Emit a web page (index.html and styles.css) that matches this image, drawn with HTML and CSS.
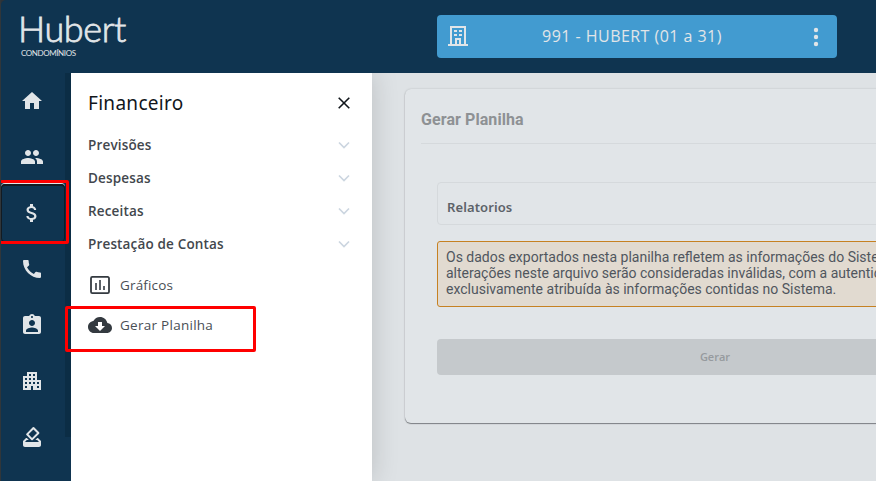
FILE: index.html
```html
<!DOCTYPE html>
<html lang="pt-BR">
<head>
<meta charset="utf-8">
<title>Hubert Condomínios</title>
<link rel="stylesheet" href="styles.css">
</head>
<body>
<div class="app">
  <header class="topbar">
    <div class="logo"><span class="logo-name">Hubert</span><span class="logo-sub">CONDOMÍNIOS</span></div>
    <div class="picker">
      <svg class="building" viewBox="0 0 20 20"><path d="M3 18V1h14v17M0 19h20M8 18v-5h4v5" fill="none" stroke="currentColor" stroke-width="2"/><path d="M6 4h3v2H6zm5 0h3v2h-3zM6 8h3v2H6zm5 0h3v2h-3z" fill="currentColor"/></svg>
      <span class="picker-label">991 - HUBERT (01 a 31)</span>
      <svg class="dots" viewBox="0 0 24 24"><circle cx="12" cy="5" r="2.2"/><circle cx="12" cy="12" r="2.2"/><circle cx="12" cy="19" r="2.2"/></svg>
    </div>
  </header>
  <div class="body">
    <nav class="rail">
      <a class="rail-item"><svg viewBox="0 0 24 24"><path d="M10 20v-6h4v6h5v-8h3L12 3 2 12h3v8z"/></svg></a>
      <a class="rail-item"><svg viewBox="0 0 24 24"><path d="M16 11c1.66 0 2.99-1.34 2.99-3S17.66 5 16 5s-3 1.34-3 3 1.34 3 3 3zm-8 0c1.66 0 2.99-1.34 2.99-3S9.66 5 8 5 5 6.34 5 8s1.34 3 3 3zm0 2c-2.33 0-7 1.17-7 3.500V19h14v-2.500c0-2.330-4.670-3.500-7-3.500zm8 0c-.29 0-.62.02-.97.050 1.160.84 1.970 1.970 1.970 3.450V19h6v-2.500c0-2.330-4.670-3.500-7-3.500z"/></svg></a>
      <a class="rail-item active"><svg viewBox="0 0 24 24"><path d="M11.800 10.900c-2.270-.59-3-1.200-3-2.150 0-1.090 1.010-1.850 2.700-1.850 1.780 0 2.440.85 2.500 2.100h2.210c-.07-1.720-1.120-3.300-3.210-3.810V3h-3v2.160c-1.940.42-3.500 1.680-3.500 3.610 0 2.310 1.910 3.460 4.700 4.130 2.500.6 3 1.480 3 2.410 0 .69-.49 1.790-2.700 1.790-2.060 0-2.870-.92-2.980-2.100h-2.200c.12 2.190 1.760 3.420 3.680 3.830V21h3v-2.150c1.950-.37 3.500-1.500 3.500-3.550 0-2.840-2.430-3.810-4.700-4.400z"/></svg></a>
      <a class="rail-item"><svg viewBox="0 0 24 24"><path d="M20.010 15.380c-1.230 0-2.420-.2-3.530-.56a.977.977 0 0 0-1.010.24l-1.570 1.970c-2.830-1.350-5.480-3.900-6.890-6.830l1.950-1.660c.27-.28.35-.67.24-1.020-.37-1.110-.56-2.300-.56-3.530 0-.54-.45-.99-.99-.99H4.190C3.650 3 3 3.240 3 3.990 3 13.280 10.730 21 20.010 21c.71 0 .99-.63.99-1.180v-3.450c0-.54-.45-.99-.99-.99z"/></svg></a>
      <a class="rail-item"><svg viewBox="0 0 24 24"><path d="M19 3h-4.180C14.400 1.840 13.300 1 12 1s-2.400.84-2.820 2H5c-1.100 0-2 .9-2 2v14c0 1.100.9 2 2 2h14c1.100 0 2-.9 2-2V5c0-1.100-.9-2-2-2zm-7 0c.55 0 1 .45 1 1s-.45 1-1 1-1-.45-1-1 .45-1 1-1zm0 4c1.660 0 3 1.340 3 3s-1.340 3-3 3-3-1.340-3-3 1.340-3 3-3zm6 12H6v-1.400c0-2 4-3.100 6-3.100s6 1.100 6 3.100V19z"/></svg></a>
      <a class="rail-item"><svg viewBox="0 0 24 24"><path d="M17 11V3H7v4H3v14h8v-4h2v4h8V11h-4zM7 19H5v-2h2v2zm0-4H5v-2h2v2zm0-4H5V9h2v2zm4 4H9v-2h2v2zm0-4H9V9h2v2zm0-4H9V5h2v2zm4 8h-2v-2h2v2zm0-4h-2V9h2v2zm0-4h-2V5h2v2zm4 12h-2v-2h2v2zm0-4h-2v-2h2v2z"/></svg></a>
      <a class="rail-item"><svg viewBox="0 0 24 24"><path d="M18 13h-.68l-2 2h1.910L19 17H5l1.780-2h2.050l-2-2H6l-3 3v4c0 1.100.89 2 1.990 2H19c1.100 0 2-.89 2-2v-4l-3-3zm-1-5.050-4.950 4.950-3.540-3.540 4.950-4.950L17 7.950zm-4.240-5.660L6.390 8.660c-.39.39-.39 1.020 0 1.410l4.950 4.950c.39.39 1.020.39 1.410 0l6.360-6.360c.39-.39.39-1.020 0-1.410L14.160 2.300a.975.975 0 0 0-1.400-.01z"/></svg></a>
    </nav>
    <aside class="menu">
      <div class="menu-head"><h2>Financeiro</h2><svg class="close" viewBox="0 0 12 12"><path d="M.7.700l10.600 10.600M11.300.7.700 11.300"/></svg></div>
      <div class="group"><span>Previsões</span><svg viewBox="0 0 12 8"><path d="M1 1.500l5 5 5-5"/></svg></div>
      <div class="group"><span>Despesas</span><svg viewBox="0 0 12 8"><path d="M1 1.500l5 5 5-5"/></svg></div>
      <div class="group"><span>Receitas</span><svg viewBox="0 0 12 8"><path d="M1 1.500l5 5 5-5"/></svg></div>
      <div class="group"><span>Prestação de Contas</span><svg viewBox="0 0 12 8"><path d="M1 1.500l5 5 5-5"/></svg></div>
      <div class="links">
        <a class="link"><svg viewBox="0 0 24 24"><path d="M4.300 3.900h15.400a1.300 1.300 0 0 1 1.300 1.300v13.600a1.300 1.300 0 0 1-1.300 1.300H4.300A1.300 1.300 0 0 1 3 18.800V5.200a1.300 1.300 0 0 1 1.300-1.300z" fill="none" stroke="currentColor" stroke-width="1.800"/><path class="bars" d="M7 10h2v7H7zm4-3h2v10h-2zm4 6h2v4h-2z"/></svg><span>Gráficos</span></a>
        <a class="link link-sheet"><svg viewBox="0 0 24 24"><path d="M19.350 10.040C18.670 6.590 15.640 4 12 4 9.110 4 6.600 5.640 5.350 8.040 2.340 8.360 0 10.910 0 14c0 3.310 2.690 6 6 6h13c2.760 0 5-2.240 5-5 0-2.640-2.050-4.780-4.650-4.960zM17 13l-5 5-5-5h3V9h4v4h3z"/></svg><span>Gerar Planilha</span></a>
      </div>
    </aside>
    <main class="content">
      <section class="card">
        <h1>Gerar Planilha</h1>
        <div class="form">
          <div class="field"><span>Relatorios</span></div>
          <div class="notice">Os dados exportados nesta planilha refletem as informações do Sistema.<br>alterações neste arquivo serão consideradas inválidas, com a autenticidade<br>exclusivamente atribuída às informações contidas no Sistema.</div>
          <div class="submit">Gerar</div>
        </div>
      </section>
    </main>
  </div>
  <div class="mark mark-rail"></div>
  <div class="mark mark-link"></div>
</div>
</body>
</html>
```
FILE: styles.css
```css
* { box-sizing: border-box; }
body { margin: 0; background: #2d3338; font-family: "Open Sans", "Noto Sans", sans-serif; }
.app { position: relative; width: 876px; height: 481px; overflow: hidden; border-left: 1px solid #30363a; }
.topbar { display: flex; height: 73px; background: #0f3450; border-top-left-radius: 5px; color: #e1e5e8; }
.logo { display: flex; flex-direction: column; width: 436px; padding: 10px 0 0 17px; font-family: Lato, sans-serif; }
.logo-name { font-size: 36px; font-weight: 300; line-height: 37px; letter-spacing: -.4px; -webkit-text-stroke: .8px #e1e5e8; }
.logo-sub { padding-left: 3px; font-size: 8px; line-height: 13px; letter-spacing: -.4px; }
.picker { display: flex; align-items: center; width: 400px; height: 43px; margin-top: 15px; padding: 0 9px 0 11px; border-radius: 4px; background: #429bd0; }
.building { width: 20px; height: 20px; margin-top: -1px; }
.picker-label { flex: 1; padding: 0 8px 2px 0; text-align: center; font-size: 16px; line-height: 22px; letter-spacing: .46px; }
.dots { width: 24px; height: 24px; fill: currentColor; }
.body { display: flex; height: 408px; }
.rail { flex: none; width: 70px; background: linear-gradient(#0b2d45, #0b2d45) 64px 0 / 6px 364px no-repeat #0f3450; }
.rail-item { display: flex; align-items: center; justify-content: center; width: 62px; height: 56px; }
.rail-item svg { width: 24px; height: 24px; fill: #e1e5e8; }
.rail-item.active { width: 64px; height: 58px; margin: -1px 0; padding: 0 2px 2px 0; border: 1px solid #131b22; border-top-width: 2px; border-radius: 4px; box-shadow: 0 -1px #e1e5e8; }
.menu { z-index: 1; flex: none; width: 301px; padding: 0 17px; background: #fff; box-shadow: 0 0 26px rgba(0, 0, 0, .16); clip-path: inset(0 -40px 0 0); }
.menu-head { display: flex; align-items: center; justify-content: space-between; height: 55px; padding: 5px 5px 0 0; }
h2 { margin: 0; padding-bottom: 1px; font: 400 19px/24px "Noto Sans", sans-serif; letter-spacing: .3px; color: #11161b; }
.close { width: 12px; height: 12px; fill: none; stroke: #11161b; stroke-width: 1.600; }
.group { display: flex; align-items: center; justify-content: space-between; height: 33px; padding-right: 5px; color: #42474d; font-size: 13.500px; line-height: 18px; font-weight: 600; letter-spacing: .16px; }
.group svg { width: 12px; height: 8px; fill: none; stroke: #ccd6e0; stroke-width: 1.700; }
.links { padding-top: 5px; }
.link { display: flex; align-items: center; height: 40px; gap: 8px; color: #494e55; font-size: 13.500px; line-height: 18px; letter-spacing: .16px; }
.link-sheet { letter-spacing: .27px; }
.link span { padding-bottom: 1px; }
.link svg { width: 24px; height: 24px; color: #343a40; fill: #343a40; }
.link .bars { fill: #5c6167; }
.content { width: 620px; flex: none; padding: 16px 0 0 33px; background: #dee2e5; }
.card { width: 620px; height: 334px; padding: 0 16px; border-radius: 6px; background: #e1e5e8; box-shadow: 0 0 2px rgba(0, 0, 0, .18), 0 1px 1px #82868a; clip-path: inset(-2px -4px -4px -4px); }
h1 { height: 55px; margin: 0; padding-top: 20px; border-bottom: 1px solid #d5d9dc; color: #8e9194; font: 700 16px/22px Roboto, sans-serif; letter-spacing: .08px; }
.form { padding: 38px 16px 0; }
.field { height: 43px; padding: 15px 9px 0; border: 1px solid #d5d9dc; border-radius: 4px; color: #5c6268; font: 600 13px/18px "Noto Sans", sans-serif; letter-spacing: .1px; }
.notice { height: 66px; margin-top: 16px; padding: 7px 8px; border: 1px solid #c68122; border-radius: 3px; background: #e1dad0; color: #50565e; font: 14px/16px Roboto, sans-serif; white-space: nowrap; overflow: hidden; }
.submit { height: 36px; margin-top: 32px; border-radius: 4px; background: #c5c9cc; color: #969a9e; text-align: center; font-size: 11px; line-height: 36px; font-weight: 600; }
.mark { position: absolute; z-index: 2; border: 3px solid #f00; border-radius: 2px; }
.mark-rail { left: -1px; top: 180px; width: 69px; height: 64px; border-left-width: 1px; }
.mark-link { left: 64px; top: 306px; width: 191px; height: 46px; }
```
